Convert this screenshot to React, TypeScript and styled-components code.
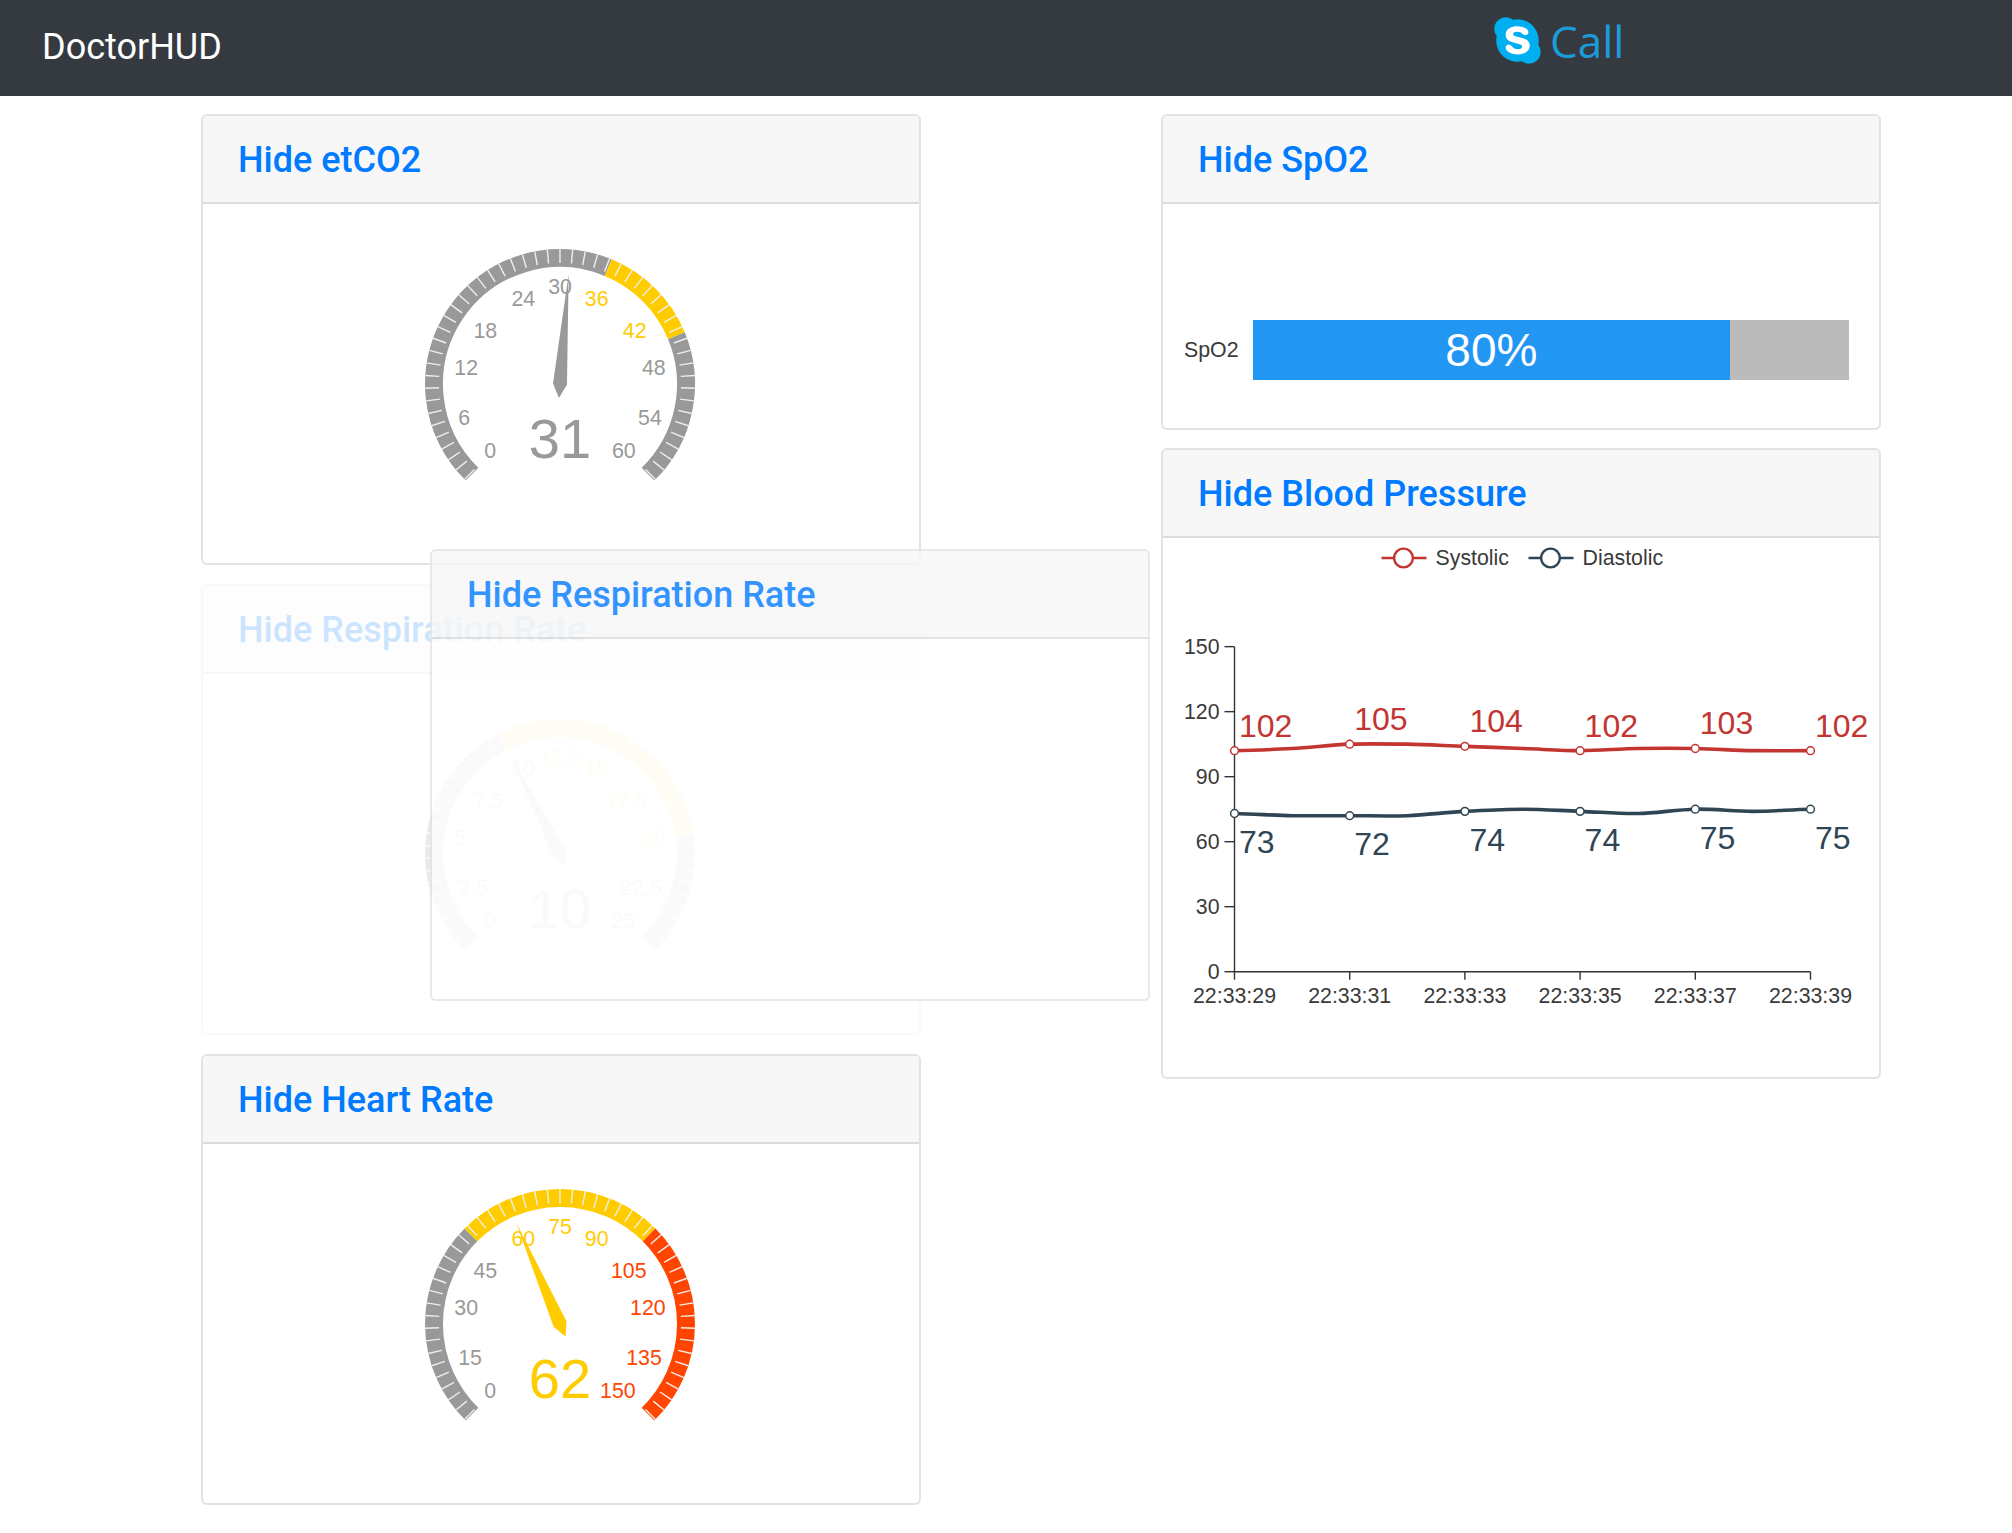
import { FC } from "react";
import styled, { createGlobalStyle } from "styled-components";
import { FaSkype } from "react-icons/fa";

const GREY = "#999999";
const YELLOW = "#ffcc00";
const RED = "#ff4500";
const SYSTOLIC = "#c23531";
const DIASTOLIC = "#2f4554";
const CHART_FONT = '"Liberation Sans", Arial, sans-serif';

interface GaugeProps {
  max: number;
  value: number;
  stops: Array<[number, string]>;
}

const toPoint = (cx: number, cy: number, r: number, deg: number) => {
  const rad = (deg * Math.PI) / 180;
  return { x: cx + Math.cos(rad) * r, y: cy - Math.sin(rad) * r };
};

const colorAt = (stops: Array<[number, string]>, fraction: number) => {
  const stop = stops.find(([limit]) => fraction <= limit + 0.0001);
  return stop ? stop[1] : GREY;
};

const Gauge: FC<GaugeProps> = ({ max, value, stops }) => {
  const cx = 150;
  const cy = 180;
  const angleOf = (fraction: number) => 225 - 270 * fraction;

  const arcs = stops.map(([limit, color], index) => {
    const from = index === 0 ? 0 : stops[index - 1][0];
    // the band runs a hair past the first and last tick
    const startDeg = index === 0 ? 225.7 : angleOf(from);
    const endDeg = limit === 1 ? -45.7 : angleOf(limit);
    const a = toPoint(cx, cy, 126, startDeg);
    const b = toPoint(cx, cy, 126, endDeg);
    const large = startDeg - endDeg > 180 ? 1 : 0;
    return (
      <path
        key={limit}
        d={`M${a.x} ${a.y}A126 126 0 ${large} 1 ${b.x} ${b.y}`}
        fill="none"
        stroke={color}
        strokeWidth={18}
      />
    );
  });

  const ticks = Array.from({ length: 51 }, (_, i) => {
    const deg = angleOf(i / 50);
    const a = toPoint(cx, cy, 135, deg);
    const b = toPoint(cx, cy, 121, deg);
    return (
      <line
        key={i}
        x1={a.x}
        y1={a.y}
        x2={b.x}
        y2={b.y}
        stroke="#eeeeee"
        strokeWidth={1.4}
      />
    );
  });

  const labels = Array.from({ length: 11 }, (_, i) => {
    const fraction = i / 10;
    const deg = angleOf(fraction);
    const rad = (deg * Math.PI) / 180;
    const unitX = Math.cos(rad);
    const unitY = -Math.sin(rad);
    const p = toPoint(cx, cy, 107, deg);
    const anchor = unitX < -0.4 ? "start" : unitX > 0.4 ? "end" : "middle";
    const shift = unitY < -0.4 ? 17 : unitY > 0.4 ? -2 : 7.5;
    return (
      <text
        key={i}
        x={p.x}
        y={p.y + shift}
        textAnchor={anchor}
        fontFamily={CHART_FONT}
        fontSize={21.33}
        fill={colorAt(stops, fraction)}
      >
        {(max * fraction).toString()}
      </text>
    );
  });

  const deg = angleOf(value / max);
  const tip = toPoint(cx, cy, 110, deg);
  const back = toPoint(cx, cy, -14, deg);
  const sideA = toPoint(cx, cy, 7, deg + 90);
  const sideB = toPoint(cx, cy, 7, deg - 90);
  const current = colorAt(stops, value / max);

  return (
    <GaugeSvg viewBox="0 0 302 360">
      {arcs}
      {ticks}
      {labels}
      <polygon
        points={`${tip.x},${tip.y} ${sideB.x},${sideB.y} ${back.x},${back.y} ${sideA.x},${sideA.y}`}
        fill={current}
      />
      <text
        x={cx}
        y={cy + 74}
        textAnchor="middle"
        fontFamily={CHART_FONT}
        fontSize={56}
        fill={current}
      >
        {value}
      </text>
    </GaugeSvg>
  );
};

// page coordinates of the plot, shifted into the card body
const OFFSET_X = 1163;
const OFFSET_Y = 538;
const plotX = (i: number) => 1234.5 - OFFSET_X + i * 57.6;
const plotY = (v: number) => 971.7 - OFFSET_Y - v * 2.167;

const systolic = [102, 103, 105, 105, 104, 103, 102, 103, 103, 102, 102];
const diastolic = [73, 72, 72, 72, 74, 75, 74, 73, 75, 74, 75];
const times = ["22:33:29", "22:33:31", "22:33:33", "22:33:35", "22:33:37", "22:33:39"];

const smoothPath = (values: number[]) => {
  const pts = values.map((v, i) => ({ x: plotX(i), y: plotY(v) }));
  let d = `M${pts[0].x} ${pts[0].y}`;
  for (let i = 0; i < pts.length - 1; i++) {
    const p0 = pts[Math.max(i - 1, 0)];
    const p1 = pts[i];
    const p2 = pts[i + 1];
    const p3 = pts[Math.min(i + 2, pts.length - 1)];
    const c1y = p1.y + (p2.y - p0.y) * 0.15;
    const c2y = p2.y - (p3.y - p1.y) * 0.15;
    d += `C${p1.x + 19} ${c1y} ${p2.x - 19} ${c2y} ${p2.x} ${p2.y}`;
  }
  return d;
};

const Series: FC<{ values: number[]; color: string; labelDy: number }> = ({
  values,
  color,
  labelDy,
}) => (
  <g>
    <path d={smoothPath(values)} fill="none" stroke={color} strokeWidth={3.6} />
    {values.map((v, i) =>
      i % 2 === 0 ? (
        <g key={i}>
          <circle
            cx={plotX(i)}
            cy={plotY(v)}
            r={3.9}
            fill="#fff"
            stroke={color}
            strokeWidth={1.5}
          />
          <text
            x={plotX(i) + 4.5}
            y={plotY(v) + labelDy}
            fontFamily={CHART_FONT}
            fontSize={32}
            fill={color}
          >
            {v}
          </text>
        </g>
      ) : null
    )}
  </g>
);

const LegendItem: FC<{ x: number; color: string; label: string }> = ({
  x,
  color,
  label,
}) => (
  <g>
    <line x1={x} y1={20} x2={x + 45} y2={20} stroke={color} strokeWidth={2.4} />
    <circle cx={x + 22} cy={20} r={9.4} fill="#fff" stroke={color} strokeWidth={2.4} />
    <text
      x={x + 54}
      y={27}
      fontFamily={CHART_FONT}
      fontSize={21.33}
      fill="#3a3a3a"
    >
      {label}
    </text>
  </g>
);

const PressureChart: FC = () => {
  const axisX = plotX(0);
  const zero = plotY(0);
  return (
    <ChartSvg viewBox="0 0 716 537">
      <LegendItem x={1381.5 - OFFSET_X} color={SYSTOLIC} label="Systolic" />
      <LegendItem x={1528.5 - OFFSET_X} color={DIASTOLIC} label="Diastolic" />
      <g stroke="#333" strokeWidth={1.4}>
        <line x1={axisX} y1={plotY(150)} x2={axisX} y2={zero} />
        <line x1={axisX} y1={zero} x2={plotX(10)} y2={zero} />
        {[0, 30, 60, 90, 120, 150].map((v) => (
          <line key={v} x1={axisX - 10} y1={plotY(v)} x2={axisX} y2={plotY(v)} />
        ))}
        {times.map((t, i) => (
          <line key={t} x1={plotX(i * 2)} y1={zero} x2={plotX(i * 2)} y2={zero + 8} />
        ))}
      </g>
      <g fontFamily={CHART_FONT} fontSize={21.33} fill="#3a3a3a">
        {[0, 30, 60, 90, 120, 150].map((v) => (
          <text key={v} x={axisX - 15} y={plotY(v) + 7.5} textAnchor="end">
            {v}
          </text>
        ))}
        {times.map((t, i) => (
          <text key={t} x={plotX(i * 2)} y={zero + 31} textAnchor="middle">
            {t}
          </text>
        ))}
      </g>
      <Series values={systolic} color={SYSTOLIC} labelDy={-14} />
      <Series values={diastolic} color={DIASTOLIC} labelDy={39.5} />
    </ChartSvg>
  );
};

const App: FC = () => (
  <>
    <GlobalStyle />
    <Navbar>
      <Brand>DoctorHUD</Brand>
      <CallLink>
        <SkypeBadge>
          <FaSkype size={53} color="#00aff0" />
        </SkypeBadge>
        <CallText>Call</CallText>
      </CallLink>
    </Navbar>
    <Main>
      <Column $gap={19}>
        <Card $height={451}>
          <CardHeader>
            <CardTitle>Hide etCO2</CardTitle>
          </CardHeader>
          <GaugeBody>
            <Gauge
              max={60}
              value={31}
              stops={[
                [35 / 60, GREY],
                [0.75, YELLOW],
                [1, GREY],
              ]}
            />
          </GaugeBody>
        </Card>
        <Card $height={451} $faded>
          <CardHeader>
            <CardTitle>Hide Respiration Rate</CardTitle>
          </CardHeader>
          <GaugeBody>
            <Gauge
              max={25}
              value={10}
              stops={[
                [0.4, GREY],
                [0.8, YELLOW],
                [1, GREY],
              ]}
            />
          </GaugeBody>
        </Card>
        <Card $height={451}>
          <CardHeader>
            <CardTitle>Hide Heart Rate</CardTitle>
          </CardHeader>
          <GaugeBody>
            <Gauge
              max={150}
              value={62}
              stops={[
                [1 / 3, GREY],
                [2 / 3, YELLOW],
                [1, RED],
              ]}
            />
          </GaugeBody>
        </Card>
        <DragGhost>
          <CardHeader>
            <CardTitle>Hide Respiration Rate</CardTitle>
          </CardHeader>
        </DragGhost>
      </Column>
      <Column $gap={18}>
        <Card $height={316}>
          <CardHeader>
            <CardTitle>Hide SpO2</CardTitle>
          </CardHeader>
          <SpoBody>
            <SpoLabel>SpO2</SpoLabel>
            <SpoBar>
              <SpoFill $percent={80}>80%</SpoFill>
            </SpoBar>
          </SpoBody>
        </Card>
        <Card $height={631}>
          <CardHeader>
            <CardTitle>Hide Blood Pressure</CardTitle>
          </CardHeader>
          <PressureChart />
        </Card>
      </Column>
    </Main>
  </>
);

export default App;

const GlobalStyle = createGlobalStyle`
  html, body {
    margin: 0;
    padding: 0;
    background: #fff;
    font-family: Roboto, "Liberation Sans", sans-serif;
  }
  * {
    box-sizing: border-box;
  }
`;

const Navbar = styled.header`
  display: flex;
  align-items: flex-start;
  height: 96px;
  padding-left: 42px;
  background: #343a40;
`;

const Brand = styled.div`
  width: 179px;
  margin-top: 25px;
  font-size: 36px;
  line-height: 44px;
  color: #fff;
`;

const CallLink = styled.div`
  display: flex;
  align-items: flex-start;
  margin-left: 1270px;
  margin-top: 14px;
`;

const SkypeBadge = styled.div`
  position: relative;
  display: flex;
  width: 53px;
  height: 53px;
  margin-right: 6px;

  &::before {
    content: "";
    position: absolute;
    inset: 10px;
    border-radius: 50%;
    background: #fff;
  }

  & svg {
    position: relative;
  }
`;

const CallText = styled.span`
  margin-top: 1px;
  font-family: "Open Sans", sans-serif;
  font-size: 44px;
  line-height: 52px;
  color: #1b9cd8;
`;

const Main = styled.main`
  display: flex;
  gap: 240px;
  padding: 18px 0 0 201px;
`;

const Column = styled.div<{ $gap: number }>`
  position: relative;
  display: flex;
  flex-direction: column;
  gap: ${({ $gap }) => $gap}px;
  width: 720px;
`;

const Card = styled.section<{ $height: number; $faded?: boolean }>`
  height: ${({ $height }) => $height}px;
  border: 2px solid rgba(0, 0, 0, 0.11);
  border-radius: 6px;
  background: #fff;
  opacity: ${({ $faded }) => ($faded ? 0.2 : 1)};
`;

const DragGhost = styled.section`
  position: absolute;
  left: 229px;
  top: 435px;
  width: 720px;
  height: 452px;
  border: 2px solid rgba(0, 0, 0, 0.11);
  border-radius: 6px;
  background: #fff;
  opacity: 0.8;
`;

const CardHeader = styled.div`
  display: flex;
  align-items: center;
  height: 88px;
  padding: 2px 0 0 35px;
  background: #f7f7f7;
  border-bottom: 2px solid rgba(0, 0, 0, 0.11);
  border-radius: 4px 4px 0 0;
`;

const CardTitle = styled.a`
  font-size: 36px;
  font-weight: 500;
  color: #007bff;
`;

const GaugeBody = styled.div`
  display: flex;
  justify-content: center;
`;

const GaugeSvg = styled.svg`
  display: block;
  width: 302px;
  height: 360px;
`;

const ChartSvg = styled.svg`
  display: block;
  width: 716px;
  height: 537px;
`;

const SpoBody = styled.div`
  display: flex;
  align-items: center;
  padding: 116px 0 0 21px;
`;

const SpoLabel = styled.span`
  width: 69px;
  font-family: "Liberation Sans", Arial, sans-serif;
  font-size: 21.33px;
  color: #3a3a3a;
`;

const SpoBar = styled.div`
  display: flex;
  width: 596px;
  height: 60px;
  background: #bbbbbb;
`;

const SpoFill = styled.div<{ $percent: number }>`
  display: flex;
  align-items: center;
  justify-content: center;
  width: ${({ $percent }) => $percent}%;
  background: #2196f3;
  font-family: "Liberation Sans", Arial, sans-serif;
  font-size: 46px;
  color: #fff;
`;
